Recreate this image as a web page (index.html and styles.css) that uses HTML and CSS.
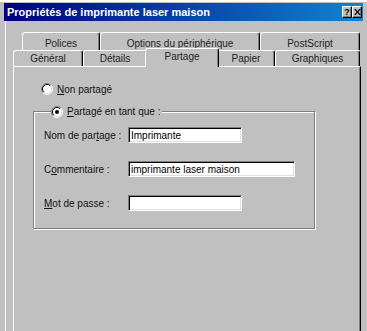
FILE: index.html
```html
<!DOCTYPE html>
<html lang="fr">
<head>
  <meta charset="UTF-8" />
  <title>Propriétés de imprimante laser maison</title>
  <link rel="stylesheet" href="styles.css">
</head>
<body>

  <div class="window">
    <div class="titlebar">
      <span class="title">Propriétés de imprimante laser maison</span>
      <div class="caption-buttons">
        <span class="cap-btn help">?</span>
        <span class="cap-btn close">
          <svg width="7" height="6" viewBox="0 0 8 7">
            <path d="M0 0h2l2 2.5L6 0h2L5 3.5 8 7H6L4 4.5 2 7H0l3-3.5z" fill="#000"/>
          </svg>
        </span>
      </div>
    </div>

    <div class="content">
      <div class="tabs">
        <div class="tab-row back">
          <div class="tab" style="width:78px">Polices</div>
          <div class="tab" style="width:160px">Options du périphérique</div>
          <div class="tab" style="width:100px">PostScript</div>
        </div>
        <div class="tab-row front">
          <div class="tab" style="width:70px">Général</div>
          <div class="tab" style="width:64px">Détails</div>
          <div class="tab selected" style="width:74px">Partage</div>
          <div class="tab" style="width:58px">Papier</div>
          <div class="tab" style="width:85px">Graphiques</div>
        </div>
      </div>

      <div class="panel">
        <div class="radio-row first">
          <svg class="radio" width="12" height="12" viewBox="0 0 12 12">
            <circle cx="6" cy="6" r="5" fill="#fff"/>
            <path d="M2.1 9.9A5.5 5.5 0 0 1 9.9 2.1" stroke="#808080" fill="none"/>
            <path d="M9.9 2.1A5.5 5.5 0 0 1 2.1 9.9" stroke="#fff" fill="none"/>
            <path d="M2.8 9.2A4.5 4.5 0 0 1 9.2 2.8" stroke="#000" fill="none"/>
            <path d="M9.2 2.8A4.5 4.5 0 0 1 2.8 9.2" stroke="#dfdfdf" fill="none"/>
          </svg>
          <span><u>N</u>on partagé</span>
        </div>

        <fieldset class="group">
          <legend class="radio-row">
            <svg class="radio" width="12" height="12" viewBox="0 0 12 12">
              <circle cx="6" cy="6" r="5" fill="#fff"/>
              <path d="M2.1 9.9A5.5 5.5 0 0 1 9.9 2.1" stroke="#808080" fill="none"/>
              <path d="M9.9 2.1A5.5 5.5 0 0 1 2.1 9.9" stroke="#fff" fill="none"/>
              <path d="M2.8 9.2A4.5 4.5 0 0 1 9.2 2.8" stroke="#000" fill="none"/>
              <path d="M9.2 2.8A4.5 4.5 0 0 1 2.8 9.2" stroke="#dfdfdf" fill="none"/>
              <circle cx="6" cy="6" r="2" fill="#000"/>
            </svg>
            <span><u>P</u>artagé en tant que :</span>
          </legend>

          <div class="field">
            <label>Nom de par<u>t</u>age :</label>
            <input type="text" class="edit" value="Imprimante" />
          </div>
          <div class="field">
            <label>C<u>o</u>mmentaire :</label>
            <input type="text" class="edit wide" value="imprimante laser maison" />
          </div>
          <div class="field">
            <label><u>M</u>ot de passe :</label>
            <input type="password" class="edit" value="" />
          </div>
        </fieldset>
      </div>
    </div>
  </div>

</body>
</html>
```

FILE: styles.css
```css
body {
  margin: 0;
  background: #c0c0c0;
  font-family: "Liberation Sans", Arial, sans-serif;
  font-size: 10px;
  color: #111;
  overflow: hidden;
}
.window {
  border-top: 2px solid #fff;
  padding: 1px 4px 0 4px;
}
.titlebar {
  height: 18px;
  display: flex;
  align-items: center;
  justify-content: space-between;
  background: linear-gradient(to right, #000080, #1084d0);
  padding: 0 1px 0 3px;
}
.title {
  color: #fff;
  font-weight: bold;
  font-size: 11px;
}
.caption-buttons {
  display: flex;
}
.cap-btn {
  width: 8px;
  height: 10px;
  background: #c0c0c0;
  border: 1px solid;
  border-color: #fff #000 #000 #fff;
  box-shadow: inset -1px -1px #808080;
  display: flex;
  align-items: center;
  justify-content: center;
  font-weight: bold;
  font-size: 9px;
  line-height: 10px;
  color: #000;
}
.content {
  margin-left: 1px;
  border-left: 1px solid #fff;
  padding: 11px 2px 0 7px;
}
.tab-row {
  display: flex;
}
.tab-row.back {
  margin-left: 9px;
  height: 18px;
}
.tab-row.front {
  height: 16px;
}
.tab {
  box-sizing: border-box;
  display: flex;
  align-items: center;
  justify-content: center;
  background: #c0c0c0;
  border-top: 1px solid #fff;
  border-left: 1px solid #fff;
  border-right: 1px solid #000;
  box-shadow: inset -1px 0 #808080;
  border-radius: 3px 3px 0 0;
  color: #222;
}
.tab-row.back .tab {
  padding-top: 3px;
}
.tab.selected {
  position: relative;
  z-index: 2;
  margin: -2px -2px -1px -2px;
  height: 19px;
  padding-bottom: 4px;
}
.panel {
  box-sizing: border-box;
  height: 280px;
  border-top: 1px solid #fff;
  border-left: 1px solid #fff;
  border-right: 1px solid #000;
  box-shadow: inset -1px 0 #808080;
  padding: 16px 0 0 19px;
}
.radio-row {
  display: flex;
  align-items: center;
  height: 12px;
}
.radio-row.first {
  margin-left: 8px;
}
.radio {
  margin-right: 4px;
  flex: none;
}
.group {
  width: 282px;
  box-sizing: border-box;
  margin: 10px 0 0 0;
  padding: 9px 0 17px 10px;
  border: 1px solid #808080;
  box-shadow: inset 1px 1px #fff, 1px 1px #fff;
  min-width: 0;
}
.group legend {
  background: #c0c0c0;
  padding: 0 2px 0 0;
  margin-left: 7px;
  height: 13px;
}
.field {
  display: flex;
  align-items: center;
  height: 16px;
  margin-bottom: 18px;
}
.field:last-child {
  margin-bottom: 0;
}
.field label {
  width: 84px;
  flex: none;
  white-space: nowrap;
}
.edit {
  box-sizing: border-box;
  width: 114px;
  height: 16px;
  margin: 0;
  padding: 0 2px;
  font-family: "Liberation Sans", Arial, sans-serif;
  font-size: 10px;
  color: #000;
  background: #fff;
  border: 1px solid;
  border-color: #808080 #fff #fff #808080;
  box-shadow: inset 1px 1px #000, inset -1px -1px #dfdfdf;
  outline: none;
}
.edit.wide {
  width: 167px;
}
```
